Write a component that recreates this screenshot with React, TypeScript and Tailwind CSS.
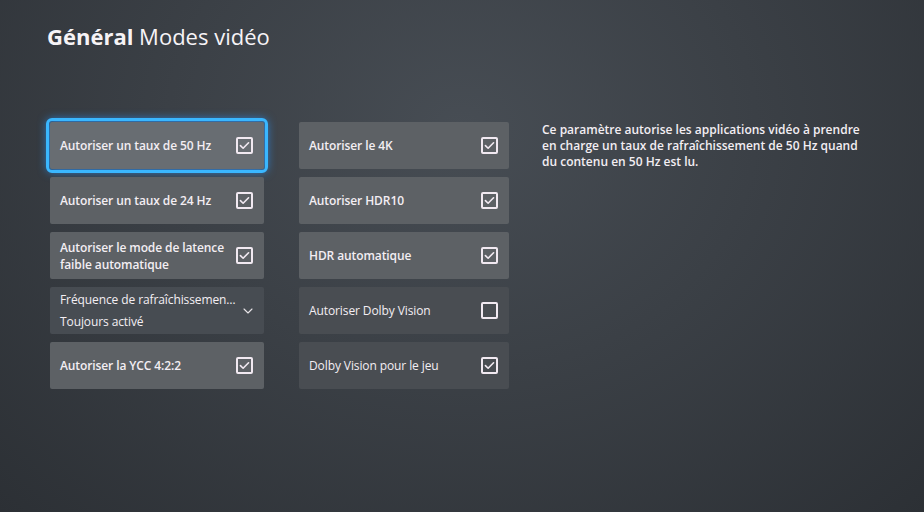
import { ChevronDown } from "lucide-react";

type Item = { label: string; checked: boolean; bold?: boolean; focused?: boolean };

const LEFT: Item[] = [
  { label: "Autoriser un taux de 50 Hz", checked: true, bold: true, focused: true },
  { label: "Autoriser un taux de 24 Hz", checked: true, bold: true },
  { label: "Autoriser le mode de latence faible automatique", checked: true, bold: true },
];

const RIGHT: Item[] = [
  { label: "Autoriser le 4K", checked: true, bold: true },
  { label: "Autoriser HDR10", checked: true, bold: true },
  { label: "HDR automatique", checked: true, bold: true },
  { label: "Autoriser Dolby Vision", checked: false },
  { label: "Dolby Vision pour le jeu", checked: true },
];

function Checkbox({ checked }: { checked: boolean }) {
  return (
    <div className="flex h-[17px] w-[17px] shrink-0 items-center justify-center rounded-[2px] border-2 border-[#f1e9f1]">
      {checked && (
        <svg viewBox="0 0 16 16" className="h-[13px] w-[13px]" fill="none">
          <path d="M3 8.2l3.3 3.2L13 4.6" stroke="#f1e9f1" strokeWidth="2" strokeLinecap="round" strokeLinejoin="round" />
        </svg>
      )}
    </div>
  );
}

function Tile({ item }: { item: Item }) {
  const bg = item.focused
    ? "bg-[#686d72] outline-[3px] outline-solid outline-[#3ab7ff] outline-offset-[1px] shadow-[0_0_10px_3px_rgba(40,150,255,0.75)]"
    : item.bold
      ? "bg-[#5d6165]"
      : "bg-[#494d52]";
  return (
    <div className={`flex h-[47px] items-center justify-between gap-1 rounded-[2px] pl-[10px] pr-[11px] ${bg}`}>
      <span
        className={`text-[12px] leading-[17px] tracking-[-0.1px] text-[#f3eef3] ${item.bold ? "font-semibold" : "font-normal"}`}
      >
        {item.label}
      </span>
      <Checkbox checked={item.checked} />
    </div>
  );
}

export default function App() {
  return (
    <div
      className="h-[512px] w-[924px] overflow-hidden bg-[radial-gradient(ellipse_at_50%_25%,#474d54_0%,#3b4046_45%,#2c3035_100%)] pl-[47px] pt-[22px]"
      style={{ fontFamily: '"Open Sans", "Noto Sans", sans-serif' }}
    >
      <h1 className="text-[22px] leading-[28px] text-[#f6f3f6]">
        <span className="font-bold">Général</span> <span className="font-normal">Modes vidéo</span>
      </h1>

      <div className="mt-[72px] flex items-start pl-[3px]">
        <div className="flex w-[214px] flex-col gap-[8px]">
          {LEFT.map((it) => (
            <Tile key={it.label} item={it} />
          ))}
          <div className="flex h-[47px] items-center justify-between gap-1 rounded-[2px] bg-[#474c52] pl-[10px] pr-[12px]">
            <div className="flex flex-col gap-[5px] whitespace-nowrap text-[12px] leading-[17px] tracking-[-0.1px] text-[#f3eef3]">
              <span>Fréquence de rafraîchissemen…</span>
              <span>Toujours activé</span>
            </div>
            <ChevronDown className="h-[16px] w-[16px] shrink-0 text-[#e8e4e8]" strokeWidth={1.6} />
          </div>
          <Tile item={{ label: "Autoriser la YCC 4:2:2", checked: true, bold: true }} />
        </div>

        <div className="ml-[35px] flex w-[210px] flex-col gap-[8px]">
          {RIGHT.map((it) => (
            <Tile key={it.label} item={it} />
          ))}
        </div>

        <p className="ml-[33px] w-[325px] text-[12px] font-semibold leading-[16px] text-[#f3eef3]">
          Ce paramètre autorise les applications vidéo à prendre en charge un taux de rafraîchissement de 50 Hz quand
          du contenu en 50 Hz est lu.
        </p>
      </div>
    </div>
  );
}
